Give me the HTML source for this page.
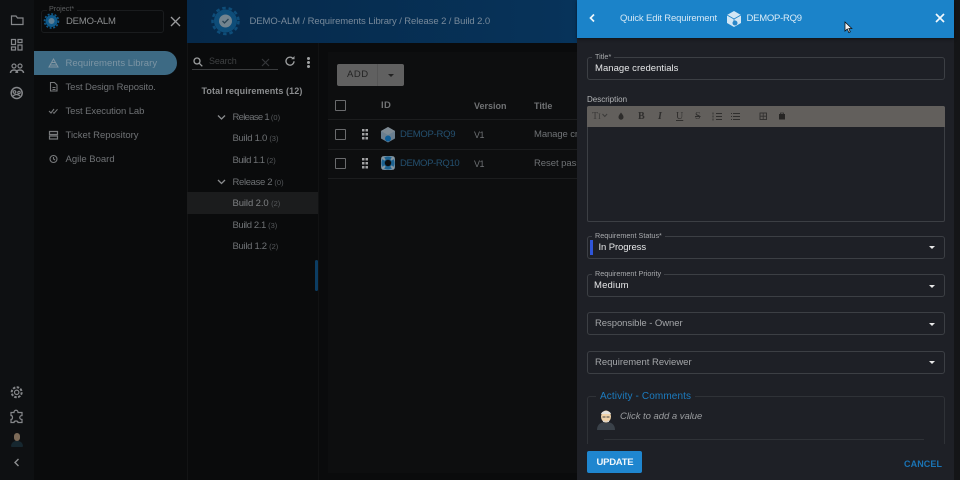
<!DOCTYPE html>
<html><head><meta charset="utf-8">
<style>
*{box-sizing:border-box}
html,body{margin:0;padding:0;width:960px;height:480px;overflow:hidden;background:#0a0b0c}
body{font-family:"Liberation Sans",sans-serif;position:relative}
.t{position:absolute;white-space:nowrap;line-height:12px;font-size:9.5px;letter-spacing:0;color:#6f7275;margin-top:1px}
.b{position:absolute}
.f{position:absolute;left:587px;width:358px;border:1px solid #3c3f44;border-radius:3px}
.l{position:absolute;left:592px;background:#1e2026;padding:0 3px;font-size:7.2px;line-height:9px;color:#a9abae;white-space:nowrap;letter-spacing:.03px}
.v{position:absolute;white-space:nowrap;font-size:9.5px;line-height:12px;letter-spacing:0;color:#e6e7e8;margin-top:1px}
.p{color:#a4a6a9}
.c{position:absolute;left:928.5px;width:0;height:0;border-left:3.5px solid transparent;border-right:3.5px solid transparent;border-top:3.5px solid #e8e8e8}
.n{color:#55585b;font-size:7.5px;letter-spacing:0}
svg{position:absolute;overflow:visible}
</style></head><body>

<div class="b" style="left:0;top:0;width:34px;height:480px;background:#0e1012"></div>
<div class="b" style="left:187px;top:0;width:1px;height:480px;background:#131415"></div>
<div class="b" style="left:187px;top:0;width:390px;height:43px;background:linear-gradient(90deg,#06294a,#07335a)"></div>
<div class="b" style="left:328px;top:52px;width:249px;height:421px;background:#0d0e0f"></div>
<div class="b" style="left:318px;top:43px;width:1px;height:437px;background:#111213"></div>

<!-- rail icons -->
<svg style="left:0;top:0" width="34" height="480" fill="none" stroke="#85878a" stroke-width="1.2">
<path d="M11.500 16h4.500l1.500 2h5.500v6.500h-11.500z"/>
<path d="M11.500 39.500h4v5h-4zM18 39.500h4v3h-4zM11.500 47h4v3h-4zM18 45h4v5h-4z"/>
<circle cx="14" cy="66" r="2"/><circle cx="20" cy="66" r="2"/><path d="M10.500 73c0-4 7-4 7 0M16 73c0-4 7.500-4 7.500 0" stroke-width="1.500"/>
<circle cx="16.700" cy="93" r="5.500" stroke-width="1.500"/><circle cx="14.500" cy="92" r="1.300"/><circle cx="19" cy="92.500" r="1.200"/><path d="M13 96c2-2 5-2 7 0"/>
<circle cx="16.700" cy="392.300" r="2.200"/><circle cx="16.700" cy="392.300" r="5" stroke-width="2" stroke-dasharray="2.500 1.400"/>
<path d="M11 412.500h3c0-3 4-3 4 0h4v3c-3 0-3 4 0 4v3h-4c0-2-4-2-4 0h-3v-3c2 0 2-4 0-4z"/>
<path d="M18.500 459l-3.500 3.500 3.500 3.500" stroke="#8d8f91" stroke-width="1.400"/>
</svg>
<div class="b" style="left:13.500px;top:433px;width:6.500px;height:8px;border-radius:3px;background:#7c6a58"></div>
<div class="b" style="left:11px;top:441px;width:12px;height:6px;border-radius:5px 5px 1px 1px;background:#16272f"></div>

<!-- project -->
<div class="b" style="left:41px;top:10px;width:123px;height:23px;border:1px solid #1a1c1e;border-radius:3px"></div>
<div class="b" style="left:47px;top:7px;width:30px;height:6px;background:#0a0b0c"></div>
<div class="t" style="left:49px;top:3px;font-size:7.200px;line-height:10px;color:#5d5f61">Project*</div>
<svg style="left:44px;top:13px" width="16" height="16"><circle cx="7.500" cy="8" r="6" fill="#0f5a8c"/><circle cx="7.500" cy="8" r="7" fill="none" stroke="#0f5a8c" stroke-width="1.600" stroke-dasharray="2 1.600"/><circle cx="7.500" cy="8" r="3" fill="#5d7f96"/></svg>
<div class="t" style="left:66px;top:15px;color:#8b8d8f;letter-spacing:-.18px">DEMO-ALM</div>

<svg style="left:170px;top:16px" width="11" height="11" stroke="#9a9b9d" stroke-width="1.300"><path d="M1 1l9 9M10 1l-9 9"/></svg>

<!-- left nav -->
<div class="b" style="left:34px;top:51px;width:143px;height:24px;border-radius:0 12px 12px 0;background:#3d6a84"></div>
<svg style="left:48px;top:57px" width="12" height="12" fill="none" stroke="#8296a2"><path d="M5.500 2l4.500 8h-9z"/><path d="M2 8h7M4 5.500h3"/></svg>
<div class="t" style="left:65.500px;top:57px;color:#7d95a4;letter-spacing:.04px">Requirements Library</div>
<svg style="left:48px;top:81px" width="12" height="85" fill="none" stroke="#77797b" stroke-width="1.100">
<path d="M2.500 1.500h4l2.500 2.500v6h-6.500zM4.500 6.500h3M4.500 8.500h3"/>
<path d="M1 30l2 2 3-4M5 31.500l1 .8 3.500-4"/>
<path d="M1.500 50.500h8v3h-8zM1.500 55h8v3h-8z" stroke-width="1.200"/>
<circle cx="5.500" cy="78" r="3.500"/><path d="M5.500 76v2l1.500 1"/>
</svg>
<div class="t" style="left:65.500px;top:81px;letter-spacing:-.1px">Test Design Reposito.</div>
<div class="t" style="left:65.500px;top:105px;letter-spacing:-.08px">Test Execution Lab</div>
<div class="t" style="left:65.500px;top:129px">Ticket Repository</div>
<div class="t" style="left:65.500px;top:153px">Agile Board</div>

<!-- tree -->
<svg style="left:192px;top:56px" width="14" height="14" fill="none" stroke="#9c9e9f" stroke-width="1.300"><circle cx="5" cy="5" r="3"/><path d="M7.300 7.300l3 3"/></svg>
<div class="t" style="left:209px;top:54px;font-size:9px;color:#3f4143;letter-spacing:-.15px">Search</div>
<svg style="left:261px;top:58px" width="9" height="9" stroke="#35373a" stroke-width="1.200"><path d="M1 1l7 7M8 1l-7 7"/></svg>
<div class="b" style="left:192px;top:69px;width:86px;height:1px;background:#3b3d3f"></div>
<svg style="left:284px;top:55px" width="12" height="12" fill="none" stroke="#9c9e9f" stroke-width="1.300"><path d="M10 6.200a4 4 0 1 1-1.300-3"/><path d="M10.500 1v3.200h-3.200z" fill="#9c9e9f" stroke="none"/></svg>
<div class="b" style="left:306.500px;top:57px;width:3px;height:3px;border-radius:50%;background:#a0a2a3;box-shadow:0 4px 0 #a0a2a3,0 8px 0 #a0a2a3"></div>
<div class="t" style="left:201.500px;top:84px;font-size:9px;font-weight:bold;color:#8b8d8f;letter-spacing:.09px">Total requirements (12)</div>
<svg style="left:217px;top:113px" width="10" height="75" fill="none" stroke="#8a8c8e" stroke-width="1.300"><path d="M1 2.500l3.500 3.500 3.500-3.500M1 67l3.500 3.500 3.500-3.500"/></svg>
<div class="b" style="left:187px;top:192px;width:131px;height:22px;background:#1b1c1d"></div>
<div class="t" style="left:232.500px;top:111px;letter-spacing:-.7px">Release 1 <span class="n">(0)</span></div>
<div class="t" style="left:232.500px;top:132px;letter-spacing:-.28px">Build 1.0 <span class="n">(3)</span></div>
<div class="t" style="left:232.500px;top:154px;letter-spacing:-.55px">Build 1.1 <span class="n">(2)</span></div>
<div class="t" style="left:232.500px;top:176px;letter-spacing:-.35px">Release 2 <span class="n">(0)</span></div>
<div class="t" style="left:232.500px;top:197px;letter-spacing:-.1px;color:#7e8083">Build 2.0 <span class="n">(2)</span></div>
<div class="t" style="left:232.500px;top:219px;letter-spacing:-.4px">Build 2.1 <span class="n">(3)</span></div>
<div class="t" style="left:232.500px;top:240px;letter-spacing:-.3px">Build 1.2 <span class="n">(2)</span></div>
<div class="b" style="left:315px;top:260px;width:3px;height:31px;border-radius:2px;background:#0c3d63"></div>

<!-- breadcrumb -->
<svg style="left:210px;top:6px" width="32" height="30"><circle cx="15.500" cy="15" r="11.500" fill="#0e4d79"/><circle cx="15.500" cy="15" r="13" fill="none" stroke="#0e4d79" stroke-width="2.500" stroke-dasharray="3.500 2.900"/><circle cx="15.500" cy="15" r="6.500" fill="#73848f"/><path d="M12.500 15l2 2 4-4" fill="none" stroke="#2a4354" stroke-width="1.300"/></svg>
<div class="t" style="left:249.500px;top:15px;color:#77899a;letter-spacing:-.09px">DEMO-ALM / Requirements Library / Release 2 / Build 2.0</div>

<!-- table -->
<div class="b" style="left:337px;top:64px;width:67px;height:22px;border-radius:2px;background:#606060"></div>
<div class="b" style="left:377px;top:64px;width:1px;height:22px;background:#565656"></div>
<div class="t" style="left:347px;top:68px;font-size:9.500px;color:#232323;letter-spacing:.5px">ADD</div>
<div class="b" style="left:387.500px;top:74px;width:0;height:0;border-left:3px solid transparent;border-right:3px solid transparent;border-top:3px solid #222"></div>
<div class="b" style="left:335px;top:100px;width:11px;height:11px;border:1px solid #6a6b6d;border-radius:1px"></div>
<div class="t" style="left:381px;top:99px;font-weight:bold;color:#707274;letter-spacing:.3px">ID</div>
<div class="t" style="left:474px;top:99px;font-size:9px;font-weight:bold;color:#707274">Version</div>
<div class="t" style="left:534px;top:99px;font-size:9px;font-weight:bold;color:#707274">Title</div>
<div class="b" style="left:328px;top:119px;width:249px;height:1px;background:#1c1d1e"></div>
<div class="b" style="left:328px;top:149px;width:249px;height:1px;background:#1c1d1e"></div>
<div class="b" style="left:328px;top:178px;width:249px;height:1px;background:#1c1d1e"></div>
<div class="b" style="left:335px;top:129px;width:11px;height:11px;border:1px solid #6a6b6d;border-radius:1px"></div>
<div class="b" style="left:335px;top:158px;width:11px;height:11px;border:1px solid #6a6b6d;border-radius:1px"></div>
<svg style="left:362px;top:129px" width="6" height="40" fill="#a2a3a4"><path d="M0 0h2.500v2.500h-2.500zM3.500 0h2.500v2.500h-2.500zM0 4h2.500v2.500h-2.500zM3.500 4h2.500v2.500h-2.500zM0 8h2.500v2.500h-2.500zM3.500 8h2.500v2.500h-2.500zM0 29h2.500v2.500h-2.500zM3.500 29h2.500v2.500h-2.500zM0 33h2.500v2.500h-2.500zM3.500 33h2.500v2.500h-2.500zM0 37h2.500v2.500h-2.500zM3.500 37h2.500v2.500h-2.500z"/></svg>
<svg style="left:380px;top:126px" width="16" height="17"><path d="M8 1l7 4v7.500l-7 4-7-4v-7.500z" fill="#6b7f8f"/><path d="M8 1l7 4-7 4-7-4z" fill="#7f8b94"/><circle cx="8" cy="12.500" r="3" fill="#0e5d96"/></svg>
<svg style="left:380px;top:155px" width="16" height="16"><rect x="1" y="1" width="14" height="14" rx="3" fill="#6e8a9e"/><circle cx="8" cy="8" r="6.500" fill="#1b618f"/><circle cx="8" cy="8" r="3.200" fill="#0b0c0d"/><path d="M2 2l3 3M14 2l-3 3M2 14l3-3M14 14l-3-3" stroke="#8797a2" stroke-width="2"/></svg>
<div class="t" style="left:400px;top:128px;color:#24506f;letter-spacing:-.25px">DEMOP-RQ9</div>
<div class="t" style="left:400px;top:157px;color:#24506f;letter-spacing:-.35px">DEMOP-RQ10</div>
<div class="t" style="left:474px;top:128px;font-size:9px;letter-spacing:-.5px">V1</div>
<div class="t" style="left:474px;top:157px;font-size:9px;letter-spacing:-.5px">V1</div>
<div class="t" style="left:534px;top:128px;letter-spacing:-.1px">Manage cr</div>
<div class="t" style="left:534px;top:157px;letter-spacing:-.05px">Reset pass</div>

<!-- right panel -->
<div class="b" style="left:577px;top:0;width:377px;height:480px;background:#1e2026"></div>
<div class="b" style="left:954px;top:0;width:6px;height:480px;background:#141517"></div>
<div class="b" style="left:577px;top:0;width:377px;height:38px;background:#1b83c9;box-shadow:0 1px 3px rgba(0,0,0,.5)"></div>
<svg style="left:588px;top:13px" width="9" height="11" fill="none" stroke="#eef6fb" stroke-width="1.700"><path d="M6 1.500l-3.500 3.500 3.500 3.500"/></svg>
<div class="t" style="left:620px;top:12px;color:#d5e8f5;letter-spacing:-.15px">Quick Edit Requirement</div>
<svg style="left:726px;top:10px" width="16" height="18"><path d="M8 1l7 4v8l-7 4-7-4v-8z" fill="#d2e6f4"/><path d="M8 9l7-4M8 9l-7-4M8 9v3" stroke="#1b83c9" stroke-width=".8"/><circle cx="9" cy="13" r="2.500" fill="#2a86c8"/></svg>
<div class="t" style="left:746.500px;top:12px;color:#dbecf7;letter-spacing:-.25px">DEMOP-RQ9</div>
<svg style="left:935px;top:13px" width="10" height="10" stroke="#f2f8fc" stroke-width="1.700"><path d="M1 1l8 8M9 1l-8 8"/></svg>
<svg style="left:844px;top:21px" width="9" height="13"><path d="M1 1v9l2.300-2 1.500 3.500 1.500-.7-1.500-3.300h3z" fill="#f4f4f4" stroke="#111" stroke-width=".8"/></svg>

<div class="f" style="top:57px;height:23px"></div>
<div class="l" style="top:52px">Title*</div>
<div class="v" style="left:595px;top:62px;letter-spacing:.03px">Manage credentials</div>

<div class="t" style="left:587px;top:94px;font-size:8px;line-height:10px;color:#b4b6b8">Description</div>
<div class="b" style="left:587px;top:106px;width:358px;height:116px;border:1px solid #3c3f44;border-radius:2px"></div>
<div class="b" style="left:587px;top:106px;width:358px;height:21px;background:#625f5c;border-radius:2px 2px 0 0"></div>
<div class="t" style="left:592px;top:110px;font-family:'Liberation Serif',serif;font-size:10px;color:#3b3a39">T<span style="font-size:8px">I</span></div>
<svg style="left:602px;top:113px" width="6" height="6" fill="none" stroke="#3b3a39"><path d="M.5 1l2.300 2.500 2.300-2.500"/></svg>
<svg style="left:617px;top:112px" width="8" height="9" fill="#2d2c2b"><path d="M4 .5c1.500 2 2.500 3 2.500 4.700a2.500 2.500 0 0 1-5 0c0-1.700 1-2.700 2.500-4.700z"/></svg>
<div class="t" style="left:638px;top:110px;font-family:'Liberation Serif',serif;font-weight:bold;font-size:10px;color:#2f2e2d">B</div>
<div class="t" style="left:658px;top:110px;font-family:'Liberation Serif',serif;font-style:italic;font-weight:bold;font-size:10px;color:#2f2e2d">I</div>
<div class="t" style="left:676px;top:110px;font-family:'Liberation Serif',serif;text-decoration:underline;font-size:10px;color:#2f2e2d">U</div>
<div class="t" style="left:695px;top:110px;font-family:'Liberation Serif',serif;text-decoration:line-through;font-size:10px;color:#2f2e2d">S</div>
<svg style="left:713px;top:112px" width="70" height="9" fill="none" stroke="#2f2e2d"><path d="M3 1.500h6M3 4.500h6M3 7.500h6M0 .5v2M0 3.500v2M0 6.500v2" stroke-width=".9"/><path d="M20 1.500h7M20 4.500h7M20 7.500h7M18 1.500h1M18 4.500h1M18 7.500h1" stroke-width=".9"/><rect x="47" y="1" width="6.500" height="6.500" stroke-width=".9"/><path d="M47 4.200h6.500M50.200 1v6.500" stroke-width=".8"/><rect x="66" y="2" width="6" height="5.500" fill="#262524" stroke="none"/><path d="M67.500 2v-1h3v1" stroke-width=".8"/></svg>

<div class="f" style="top:236px;height:23px"></div>
<div class="l" style="top:231px">Requirement Status*</div>
<div class="b" style="left:590px;top:240px;width:3px;height:15px;background:#2f55d8"></div>
<div class="v" style="left:598.500px;top:241px;letter-spacing:-.1px">In Progress</div>
<div class="c" style="top:246px"></div>

<div class="f" style="top:274px;height:23px"></div>
<div class="l" style="top:269px">Requirement Priority</div>
<div class="v" style="left:594px;top:279px;letter-spacing:.15px">Medium</div>
<div class="c" style="top:284.500px"></div>

<div class="f" style="top:312px;height:23px"></div>
<div class="v p" style="left:595px;top:317px;letter-spacing:-.06px">Responsible - Owner</div>
<div class="c" style="top:322.500px"></div>

<div class="f" style="top:351px;height:23px"></div>
<div class="v p" style="left:595px;top:356px">Requirement Reviewer</div>
<div class="c" style="top:361px"></div>

<div class="b" style="left:587px;top:396px;width:358px;height:60px;border:1px solid #2f3237;border-radius:3px"></div>
<div class="b" style="left:596px;top:390px;background:#1e2026;padding:0 4px;color:#1c7cc0;font-size:10px;line-height:12px;letter-spacing:.12px;white-space:nowrap;margin-top:1px">Activity - Comments</div>
<svg style="left:596px;top:409px" width="20" height="21"><path d="M1 21c0-6 4-8 9-8s9 2 9 8z" fill="#3a4149"/><ellipse cx="10" cy="7.500" rx="5" ry="6" fill="#f0d2a8"/><path d="M5 5c1-4 9-4 10 0z" fill="#e5e2dc"/><path d="M6.500 8h3M10.500 8h3" stroke="#444" stroke-width=".9"/><path d="M7 11c2 2 4 2 6 0v2h-6z" fill="#d6d3cf"/></svg>
<div class="t" style="left:620px;top:410px;font-style:italic;color:#9a9c9f;letter-spacing:-.03px">Click to add a value</div>
<div class="b" style="left:604px;top:439px;width:320px;height:1px;background:#2f3237"></div>

<div class="b" style="left:577px;top:444px;width:377px;height:36px;background:#1e2026"></div>
<div class="b" style="left:587px;top:451px;width:55px;height:22px;border-radius:2px;background:#1f86cf"></div>
<div class="t" style="left:596.500px;top:456px;color:#f2f7fb;font-weight:bold;letter-spacing:-.25px">UPDATE</div>
<div class="t" style="left:904px;top:457px;color:#1a74b5;font-weight:bold;font-size:9px;letter-spacing:.1px">CANCEL</div>

</body></html>
